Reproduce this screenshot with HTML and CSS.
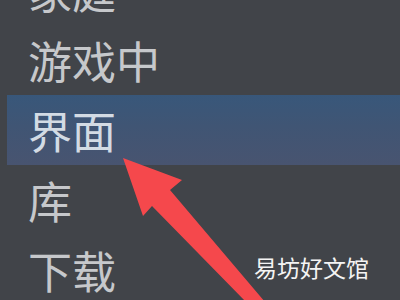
FILE: index.html
```html
<!DOCTYPE html>
<html lang="zh-CN">
<head>
    <meta charset="UTF-8">
    <title>界面</title>
    <link rel="stylesheet" href="styles.css">
</head>
<body>
    <nav class="menu">
        <div class="menu-item">家庭</div>
        <div class="menu-item">游戏中</div>
        <div class="menu-item active">界面</div>
        <div class="menu-item">库</div>
        <div class="menu-item">下载</div>
    </nav>

    <svg class="arrow" width="400" height="300" viewBox="0 0 400 300">
        <polygon points="123,158 182,180 170,190 265,302 246,302 152,206 143,216" fill="#f5484c"/>
    </svg>

    <div class="watermark">易坊好文馆</div>
</body>
</html>
```

FILE: styles.css
```css
html, body {
    margin: 0;
    padding: 0;
    width: 400px;
    height: 300px;
    overflow: hidden;
}

body {
    background-color: #414449;
    font-family: "Noto Sans CJK SC", "Noto Sans", sans-serif;
    position: relative;
}

.menu {
    display: flex;
    flex-direction: column;
    margin-top: -45px;
    padding-left: 7px;
}

.menu-item {
    height: 70px;
    line-height: 70px;
    padding-left: 21px;
    font-size: 44px;
    color: #c6c8cb;
}

.menu-item.active {
    background: linear-gradient(to bottom, #38577a 0%, #405574 45%, #485470 100%);
    color: #d3dbe4;
}

.arrow {
    position: absolute;
    left: 0;
    top: 0;
}

.watermark {
    position: absolute;
    left: 254px;
    top: 250px;
    font-size: 23px;
    color: #f4f4f4;
    letter-spacing: 0;
}
```
